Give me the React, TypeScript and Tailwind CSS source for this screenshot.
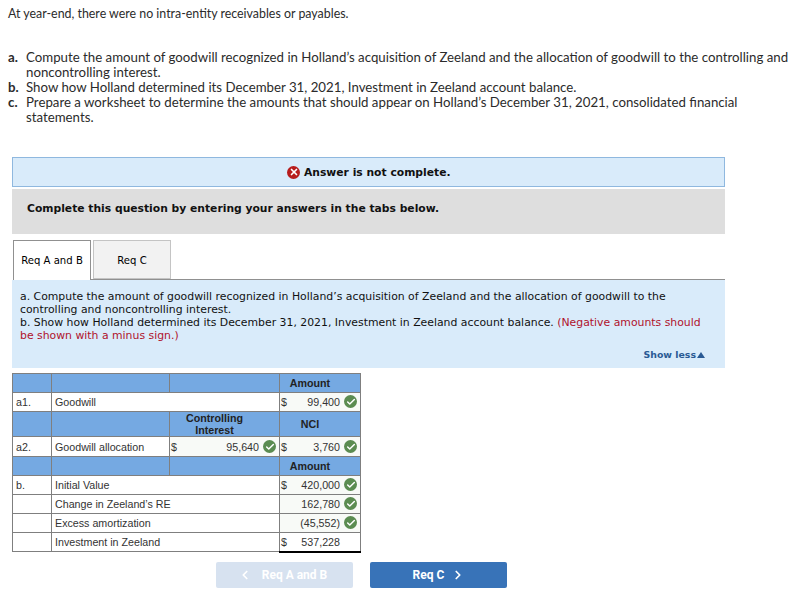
import { Check, ChevronLeft, ChevronRight, X } from "lucide-react";

const head = "border border-[#7f7f7f] bg-[#75a9e2] p-0 text-center font-bold leading-[12px] text-[#222]";
const headPad = "border border-[#7f7f7f] bg-[#75a9e2] py-0 pl-0 pr-[20px] text-center font-bold leading-[12px] text-[#222]";
const cell = "border border-[#7f7f7f] bg-white px-[3px] py-0 text-[#333]";
const money = "border border-[#7f7f7f] bg-[#f8faf7] pl-[1px] pr-[3px] py-0 text-[#333]";

function Tick() {
  return (
    <span className="ml-[4px] inline-flex h-[13px] w-[13px] shrink-0 items-center justify-center rounded-full bg-[#5b8c51]">
      <Check size={10} strokeWidth={3.5} className="text-white" />
    </span>
  );
}

function Amount({ dollar, value, tick = true }: { dollar?: boolean; value: string; tick?: boolean }) {
  return (
    <div className="flex items-center">
      <span>{dollar ? "$" : ""}</span>
      <span className="ml-auto">{value}</span>
      {tick ? <Tick /> : <span className="w-[17px]" />}
    </div>
  );
}

function WorksheetTable() {
  return (
    <table className="ml-[12px] mt-[5px] w-[348px] table-fixed border-collapse font-['Liberation_Sans',sans-serif] text-[10.7px]">
      <colgroup>
        <col className="w-[39px]" />
        <col className="w-[118px]" />
        <col className="w-[110px]" />
        <col className="w-[81px]" />
      </colgroup>
      <tbody>
        <tr className="h-[19px]">
          <td className={head} />
          <td className={head} />
          <td className={head} />
          <td className={headPad}>Amount</td>
        </tr>
        <tr className="h-[19px]">
          <td className={cell}>a1.</td>
          <td className={cell} colSpan={2}>Goodwill</td>
          <td className={money}>
            <Amount dollar value="99,400" />
          </td>
        </tr>
        <tr className="h-[25px]">
          <td className={head} />
          <td className={head} />
          <td className={headPad}>
            Controlling
            <br />
            Interest
          </td>
          <td className={headPad}>NCI</td>
        </tr>
        <tr className="h-[20px]">
          <td className={`${cell} pt-[1px]`}>a2.</td>
          <td className={`${cell} pt-[1px]`}>Goodwill allocation</td>
          <td className={`${money} pt-[1px]`}>
            <Amount dollar value="95,640" />
          </td>
          <td className={`${money} pt-[1px]`}>
            <Amount dollar value="3,760" />
          </td>
        </tr>
        <tr className="h-[19px]">
          <td className={head} />
          <td className={head} />
          <td className={head} />
          <td className={headPad}>Amount</td>
        </tr>
        <tr className="h-[19px]">
          <td className={cell}>b.</td>
          <td className={cell} colSpan={2}>Initial Value</td>
          <td className={money}>
            <Amount dollar value="420,000" />
          </td>
        </tr>
        <tr className="h-[19px]">
          <td className={cell} />
          <td className={cell} colSpan={2}>Change in Zeeland&rsquo;s RE</td>
          <td className={money}>
            <Amount value="162,780" />
          </td>
        </tr>
        <tr className="h-[19px]">
          <td className={cell} />
          <td className={cell} colSpan={2}>Excess amortization</td>
          <td className={money}>
            <Amount value="(45,552)" />
          </td>
        </tr>
        <tr className="h-[19px]">
          <td className={cell} />
          <td className={cell} colSpan={2}>Investment in Zeeland</td>
          <td className="border border-[#7f7f7f] border-t-black border-b-2 border-b-black bg-white pl-[1px] pr-[3px] py-0 text-[#333]">
            <Amount dollar value="537,228" tick={false} />
          </td>
        </tr>
      </tbody>
    </table>
  );
}

export default function App() {
  return (
    <div className="h-[607px] w-[812px] overflow-hidden bg-white font-['Verdana','DejaVu_Sans',sans-serif] text-black">
      <div className="pl-[8px] pt-[6px] font-['Lato',sans-serif] leading-[16px] text-[#2b2b2b]">
        <p className="text-[12.4px]">At year-end, there were no intra-entity receivables or payables.</p>
        <ol className="mt-[28px] w-[800px] text-[13.25px]">
          <li className="flex leading-[15px]">
            <b className="w-[18px] shrink-0">a.</b>
            <span>
              Compute the amount of goodwill recognized in Holland&rsquo;s acquisition of Zeeland and the allocation of goodwill to the controlling and noncontrolling interest.
            </span>
          </li>
          <li className="flex leading-[15px]">
            <b className="w-[18px] shrink-0">b.</b>
            <span>Show how Holland determined its December 31, 2021, Investment in Zeeland account balance.</span>
          </li>
          <li className="flex leading-[15px]">
            <b className="w-[18px] shrink-0">c.</b>
            <span className="w-[730px]">
              Prepare a worksheet to determine the amounts that should appear on Holland&rsquo;s December 31, 2021, consolidated financial statements.
            </span>
          </li>
        </ol>
      </div>

      <div className="ml-[12px] mt-[32px] flex h-[30px] w-[713px] items-center border border-[#8fb8df] bg-[#d9ebfa] pl-[274px]">
        <span className="flex h-[13px] w-[13px] items-center justify-center rounded-full bg-[#b71c1c]">
          <X size={10} strokeWidth={4} className="text-white" />
        </span>
        <b className="ml-[4px] pt-[2px] text-[10.75px] text-[#111]">Answer is not complete.</b>
      </div>

      <div className="ml-[12px] mt-[2px] flex h-[45px] w-[713px] items-center bg-[#dedede] pb-[4px] pl-[15px]">
        <b className="text-[10.75px] text-[#111]">Complete this question by entering your answers in the tabs below.</b>
      </div>

      <div className="ml-[13px] mt-[6px] flex h-[40px] w-[712px] gap-[2px] border-b border-[#909090]">
        <div className="-mb-px flex h-[40px] w-[78px] items-center justify-center border border-b-0 border-[#909090] bg-white pt-[1px] text-[10.1px]">
          Req A and B
        </div>
        <div className="flex h-[39px] w-[78px] items-center justify-center border border-[#c4c4c4] bg-[#f2f2f2] pt-[2px] text-[10.1px]">
          Req C
        </div>
      </div>

      <div className="ml-[12px] h-[88px] w-[713px] bg-[#d9ebfa] pl-[8px] pr-[16px] pt-[10px] text-[10.86px] leading-[13px] text-[#111]">
        <p>
          a. Compute the amount of goodwill recognized in Holland&rsquo;s acquisition of Zeeland and the allocation of goodwill to the controlling and noncontrolling interest.
        </p>
        <p>
          b. Show how Holland determined its December 31, 2021, Investment in Zeeland account balance.{" "}
          <span className="text-[#b0122c]">(Negative amounts should be shown with a minus sign.)</span>
        </p>
        <div className="mr-[4px] mt-[6px] flex items-center justify-end text-[9.4px] font-bold text-[#2a5a94]">
          Show less
          <span className="ml-[1px] h-0 w-0 border-x-[4px] border-b-[6px] border-x-transparent border-b-[#2a5a94]" />
        </div>
      </div>

      <WorksheetTable />

      <div className="ml-[216px] mt-[9px] flex gap-[17px] font-['Roboto',sans-serif] text-[12px] font-bold text-white">
        <div className="flex h-[26px] w-[137px] items-center justify-center rounded-[2px] bg-[#d7e2f0] pr-[4px]">
          <ChevronLeft size={14} strokeWidth={3} className="mr-[10px]" />
          Req A and B
        </div>
        <div className="flex h-[26px] w-[137px] items-center justify-center rounded-[2px] bg-[#3873b8] pl-[1px]">
          Req C
          <ChevronRight size={14} strokeWidth={3} className="ml-[7px]" />
        </div>
      </div>
    </div>
  );
}
